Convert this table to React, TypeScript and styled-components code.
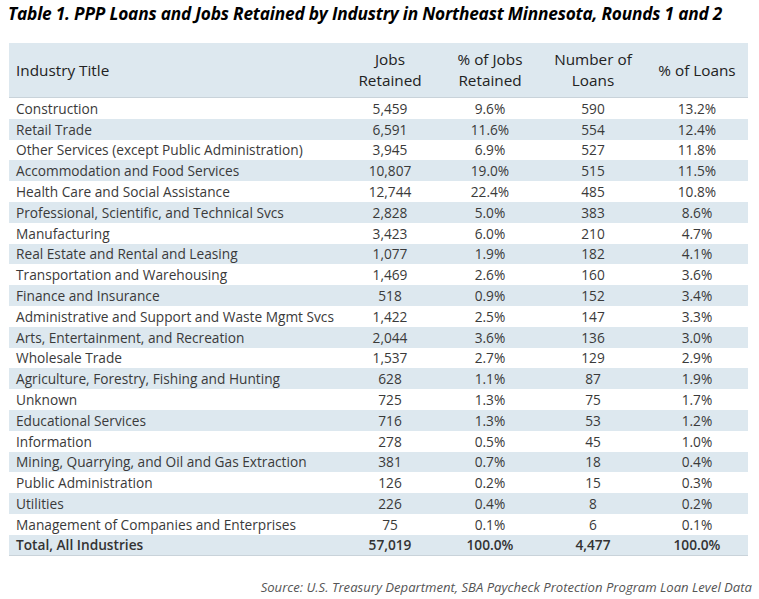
import styled, { createGlobalStyle } from "styled-components"

const GlobalStyle = createGlobalStyle`
body {
  margin: 0;
  background: #ffffff;
}
`

const Page = styled.div`
width: 759px;
height: 599px;
padding: 2px 7px 0 9px;
box-sizing: border-box;
display: flex;
flex-direction: column;
`

const Title = styled.h1`
margin: 0 0 0 -1px;
font-family: "Open Sans", "Liberation Sans", sans-serif;
font-size: 17.3px;
font-weight: 700;
font-style: italic;
color: #000;
line-height: 24px;
letter-spacing: -0.2px;
`

const Table = styled.div`
margin-top: 17px;
width: 739px;
font-family: "Open Sans", "Noto Sans", sans-serif;
font-size: 13.7px;
color: #333;
`

const Columns = "331px 100px 100px 106px 102px"

const HeaderRow = styled.div`
display: grid;
grid-template-columns: ${Columns};
height: 55px;
background: #dde8ef;
border-bottom: 1px solid #c9d3da;
box-sizing: border-box;
color: #222;
font-size: 15.3px;
line-height: 21px;
`

const HeadCell = styled.div<{ $left?: boolean }>`
display: flex;
align-items: center;
justify-content: ${p => (p.$left ? "flex-start" : "center")};
text-align: center;
padding-left: ${p => (p.$left ? "7px" : "0")};
`

const Row = styled.div<{ $shade: boolean; $total?: boolean }>`
display: grid;
grid-template-columns: ${Columns};
height: 20.8px;
align-items: center;
background: ${p => (p.$shade ? "#dde8ef" : "#ffffff")};
font-weight: ${p => (p.$total ? 600 : 400)};
color: ${p => (p.$total ? "#333" : "#3a3a3a")};
border-bottom: ${p => (p.$total ? "1px solid #c9d3da" : "none")};
box-sizing: border-box;
`

const Cell = styled.div<{ $left?: boolean }>`
text-align: ${p => (p.$left ? "left" : "center")};
padding-left: ${p => (p.$left ? "7px" : "0")};
white-space: nowrap;
`

const Source = styled.div`
margin-top: 22px;
text-align: right;
font-family: "Open Sans", "Liberation Sans", sans-serif;
font-style: italic;
font-size: 13.1px;
color: #555;
`

const rows: [string, string, string, string, string][] = [
  ["Construction", "5,459", "9.6%", "590", "13.2%"],
  ["Retail Trade", "6,591", "11.6%", "554", "12.4%"],
  ["Other Services (except Public Administration)", "3,945", "6.9%", "527", "11.8%"],
  ["Accommodation and Food Services", "10,807", "19.0%", "515", "11.5%"],
  ["Health Care and Social Assistance", "12,744", "22.4%", "485", "10.8%"],
  ["Professional, Scientific, and Technical Svcs", "2,828", "5.0%", "383", "8.6%"],
  ["Manufacturing", "3,423", "6.0%", "210", "4.7%"],
  ["Real Estate and Rental and Leasing", "1,077", "1.9%", "182", "4.1%"],
  ["Transportation and Warehousing", "1,469", "2.6%", "160", "3.6%"],
  ["Finance and Insurance", "518", "0.9%", "152", "3.4%"],
  ["Administrative and Support and Waste Mgmt Svcs", "1,422", "2.5%", "147", "3.3%"],
  ["Arts, Entertainment, and Recreation", "2,044", "3.6%", "136", "3.0%"],
  ["Wholesale Trade", "1,537", "2.7%", "129", "2.9%"],
  ["Agriculture, Forestry, Fishing and Hunting", "628", "1.1%", "87", "1.9%"],
  ["Unknown", "725", "1.3%", "75", "1.7%"],
  ["Educational Services", "716", "1.3%", "53", "1.2%"],
  ["Information", "278", "0.5%", "45", "1.0%"],
  ["Mining, Quarrying, and Oil and Gas Extraction", "381", "0.7%", "18", "0.4%"],
  ["Public Administration", "126", "0.2%", "15", "0.3%"],
  ["Utilities", "226", "0.4%", "8", "0.2%"],
  ["Management of Companies and Enterprises", "75", "0.1%", "6", "0.1%"],
]

export default function App() {
  return (
    <>
      <GlobalStyle />
      <Page>
        <Title>Table 1. PPP Loans and Jobs Retained by Industry in Northeast Minnesota, Rounds 1 and 2</Title>
        <Table>
          <HeaderRow>
            <HeadCell $left>Industry Title</HeadCell>
            <HeadCell>Jobs<br />Retained</HeadCell>
            <HeadCell>% of Jobs<br />Retained</HeadCell>
            <HeadCell>Number of<br />Loans</HeadCell>
            <HeadCell>% of Loans</HeadCell>
          </HeaderRow>
          {rows.map((r, i) => (
            <Row key={r[0]} $shade={i % 2 === 1}>
              <Cell $left>{r[0]}</Cell>
              <Cell>{r[1]}</Cell>
              <Cell>{r[2]}</Cell>
              <Cell>{r[3]}</Cell>
              <Cell>{r[4]}</Cell>
            </Row>
          ))}
          <Row $shade $total>
            <Cell $left>Total, All Industries</Cell>
            <Cell>57,019</Cell>
            <Cell>100.0%</Cell>
            <Cell>4,477</Cell>
            <Cell>100.0%</Cell>
          </Row>
        </Table>
        <Source>Source: U.S. Treasury Department, SBA Paycheck Protection Program Loan Level Data</Source>
      </Page>
    </>
  )
}
